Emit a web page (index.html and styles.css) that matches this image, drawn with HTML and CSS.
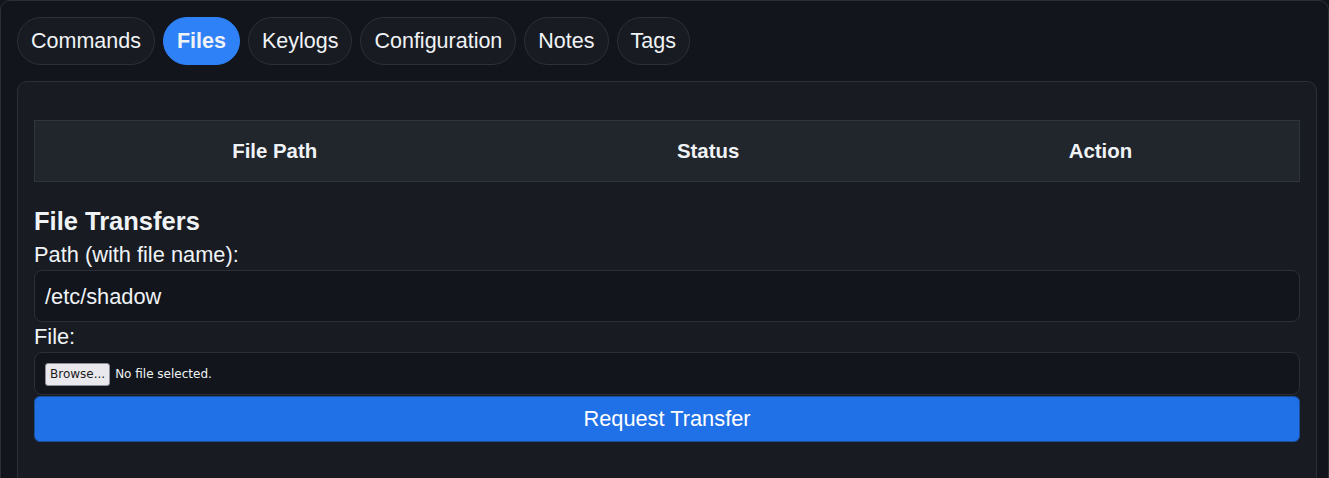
FILE: index.html
```html
<!DOCTYPE html>
<html>
<head>
<meta charset="utf-8">
<link rel="stylesheet" href="styles.css">
</head>
<body>
<div class="panel">
  <nav class="tabs">
    <span class="tab">Commands</span>
    <span class="tab active">Files</span>
    <span class="tab">Keylogs</span>
    <span class="tab">Configuration</span>
    <span class="tab">Notes</span>
    <span class="tab">Tags</span>
  </nav>
  <section class="card">
    <table class="files-table">
      <thead>
        <tr>
          <th class="col-path">File Path</th>
          <th class="col-status">Status</th>
          <th class="col-action">Action</th>
        </tr>
      </thead>
    </table>
    <h2 class="title">File Transfers</h2>
    <label class="label">Path (with file name):</label>
    <div class="input">/etc/shadow</div>
    <label class="label">File:</label>
    <div class="file-input">
      <span class="browse">Browse...</span>
      <span class="nofile">No file selected.</span>
    </div>
    <button class="submit">Request Transfer</button>
  </section>
</div>
</body>
</html>
```

FILE: styles.css
```css
html, body {
  margin: 0;
  padding: 0;
  background: #12161c;
}
body {
  font-family: "Liberation Sans", Arial, sans-serif;
  color: #f0f3f6;
  width: 1329px;
  height: 478px;
  overflow: hidden;
}
.panel {
  box-sizing: border-box;
  width: 1329px;
  min-height: 520px;
  background: #12161c;
  border: 1px solid #2b2f36;
  border-radius: 10px;
  padding: 16px 11px 16px 16px;
}
.tabs {
  display: flex;
  gap: 8px;
}
.tab {
  font-size: 21.5px;
  line-height: 30px;
  padding: 8px 13px;
  border: 1px solid #2c3037;
  border-radius: 24px;
  background: #181c22;
  color: #f0f3f6;
}
.tab.active {
  background: #2f81f7;
  border-color: #2f81f7;
  font-weight: bold;
}
.card {
  margin-top: 16px;
  background: #181c22;
  border: 1px solid #2c3036;
  border-radius: 10px;
  padding: 38px 16px 40px 16px;
  min-height: 400px;
}
.files-table {
  width: 100%;
  border-collapse: collapse;
  background: #21252c;
  border: 1px solid #30353c;
}
.files-table th {
  font-size: 20.4px;
  line-height: 30px;
  font-weight: bold;
  padding: 15px 8px;
  text-align: center;
}
.col-path { width: 483px; }
.col-status { width: 386px; }
.col-action { width: 396px; }
.title {
  margin: 20px 0 0 0;
  font-size: 25.5px;
  line-height: 38px;
  font-weight: bold;
}
.label {
  display: block;
  font-size: 21.8px;
  line-height: 30px;
}
.input {
  box-sizing: border-box;
  height: 52px;
  background: #12161c;
  border: 1px solid #2a2e35;
  border-radius: 8px;
  padding: 11px 10px 10px 10px;
  font-size: 21.8px;
  line-height: 29px;
}
.file-input {
  box-sizing: border-box;
  height: 43px;
  background: #12161c;
  border: 1px solid #2a2e35;
  border-radius: 8px;
  padding: 0 10px;
  display: flex;
  align-items: center;
  gap: 5px;
  font-family: "DejaVu Sans", sans-serif;
  font-size: 12px;
}
.browse {
  background: #e9e9ed;
  color: #1b1b1b;
  border: 1px solid #8f8f9d;
  border-radius: 3px;
  padding: 3px 4px;
  line-height: 15px;
  margin-top: 1px;
}
.nofile {
  color: #f0f3f6;
}
.submit {
  display: block;
  box-sizing: border-box;
  width: 100%;
  height: 46px;
  margin-top: 1px;
  background: #2071e8;
  border: 1px solid #1c4f9a;
  border-radius: 6px;
  color: #ffffff;
  font-family: "Liberation Sans", Arial, sans-serif;
  font-size: 21.8px;
}
```
